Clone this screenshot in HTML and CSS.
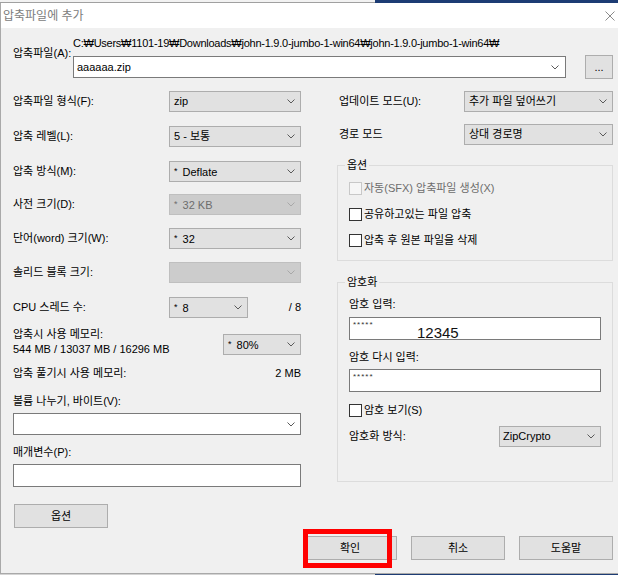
FILE: index.html
```html
<!DOCTYPE html>
<html lang="ko">
<head>
<meta charset="utf-8">
<title>압축파일에 추가</title>
<link rel="stylesheet" href="styles.css">
</head>
<body>
<svg class="defs" width="0" height="0" aria-hidden="true">
  <symbol id="chev" viewBox="0 0 8 5"><path d="M0.5 0.5 L4 4 L7.5 0.5" fill="none" stroke="currentColor" stroke-width="1"/></symbol>
</svg>
<div class="strip strip-top"><div class="strip-light"></div><div class="strip-dark"></div></div>
<div class="window">
  <div class="titlebar">
    <span class="title">압축파일에 추가</span>
    <svg class="close" width="10" height="10" viewBox="0 0 10 10"><path d="M0.5 0.5 L9.5 9.5 M9.5 0.5 L0.5 9.5" stroke="#8a8a8a" stroke-width="1" fill="none"/></svg>
  </div>
  <div class="body">
    <div class="file-row">
      <div class="file-label">압축파일(A):</div>
      <div class="file-main">
        <div class="path">C:₩Users₩1101-19₩Downloads₩john-1.9.0-jumbo-1-win64₩john-1.9.0-jumbo-1-win64₩</div>
        <div class="file-inputs">
          <div class="combo file-combo"><span>aaaaaa.zip</span><svg class="chev"><use href="#chev"/></svg></div>
          <div class="btn browse">...</div>
        </div>
      </div>
    </div>

    <div class="columns">
      <div class="col-left">
        <div class="srow"><span>압축파일 형식(F):</span><div class="select w132"><span>zip</span><svg class="chev"><use href="#chev"/></svg></div></div>
        <div class="srow"><span>압축 레벨(L):</span><div class="select w132"><span>5 - 보통</span><svg class="chev"><use href="#chev"/></svg></div></div>
        <div class="srow"><span>압축 방식(M):</span><div class="select w132"><span><span class="ast">*</span>Deflate</span><svg class="chev"><use href="#chev"/></svg></div></div>
        <div class="srow"><span>사전 크기(D):</span><div class="select w132 disabled"><span><span class="ast">*</span>32 KB</span><svg class="chev"><use href="#chev"/></svg></div></div>
        <div class="srow"><span>단어(word) 크기(W):</span><div class="select w132"><span><span class="ast">*</span>32</span><svg class="chev"><use href="#chev"/></svg></div></div>
        <div class="srow"><span>솔리드 블록 크기:</span><div class="select w132 disabled"><span></span><svg class="chev"><use href="#chev"/></svg></div></div>
        <div class="cpu"><span>CPU 스레드 수:</span><div class="select"><span><span class="ast">*</span>8</span><svg class="chev"><use href="#chev"/></svg></div><span class="right">/ 8</span></div>
        <div class="mem">
          <div class="mem-text">압축시 사용 메모리:<br>544 MB / 13037 MB / 16296 MB</div>
          <div class="select"><span><span class="ast">*</span>80%</span><svg class="chev"><use href="#chev"/></svg></div>
        </div>
        <div class="decomp"><span>압축 풀기시 사용 메모리:</span><span>2 MB</span></div>
        <div class="lbl">볼륨 나누기, 바이트(V):</div>
        <div><div class="combo vol-combo"><span></span><svg class="chev"><use href="#chev"/></svg></div></div>
        <div class="lbl">매개변수(P):</div>
        <div><div class="input"></div></div>
        <div><div class="btn opt-btn">옵션</div></div>
      </div>

      <div class="col-right">
        <div class="rrow"><span>업데이트 모드(U):</span><div class="select w149"><span>추가 파일 덮어쓰기</span><svg class="chev"><use href="#chev"/></svg></div></div>
        <div class="rrow"><span>경로 모드</span><div class="select w149"><span>상대 경로명</span><svg class="chev"><use href="#chev"/></svg></div></div>

        <fieldset class="group opts">
          <legend>옵션</legend>
          <div class="check off"><span class="cb"></span><span>자동(SFX) 압축파일 생성(X)</span></div>
          <div class="check"><span class="cb"></span><span>공유하고있는 파일 압축</span></div>
          <div class="check"><span class="cb"></span><span>압축 후 원본 파일을 삭제</span></div>
        </fieldset>

        <fieldset class="group enc">
          <legend>암호화</legend>
          <div class="enc-label">암호 입력:</div>
          <div class="pw">*****<span class="pw-note">12345</span></div>
          <div class="enc-label second">암호 다시 입력:</div>
          <div class="pw second">*****</div>
          <div class="check show"><span class="cb"></span><span>암호 보기(S)</span></div>
          <div class="method"><span>암호화 방식:</span><div class="select w102"><span>ZipCrypto</span><svg class="chev"><use href="#chev"/></svg></div></div>
        </fieldset>
      </div>
    </div>

    <div class="actions">
      <div class="btn act">확인</div>
      <div class="btn act">취소</div>
      <div class="btn act">도움말</div>
    </div>
  </div>
</div>
<div class="strip strip-bottom"><div class="strip-light"></div><div class="strip-dark"></div></div>
<div class="highlight"></div>
</body>
</html>
```

FILE: styles.css
```css
* { box-sizing: border-box; }
html, body { margin: 0; padding: 0; }
body {
  width: 618px;
  height: 575px;
  overflow: hidden;
  position: relative;
  font-family: "Liberation Sans", "Noto Sans CJK KR", sans-serif;
  font-size: 11px;
  line-height: 13px;
  color: #000;
  background: #f0f0f0;
}
.defs { position: absolute; width: 0; height: 0; }

.strip { display: flex; }
.strip-top { height: 3px; }
.strip-top .strip-light { width: 375px; background: #f2f2f2; border-bottom: 1px solid #a0a0a0; }
.strip-dark { flex: 1; background: #1d3c74; }
.strip-bottom { height: 1px; }
.strip-bottom .strip-light { width: 375px; background: #d4d4d4; }

.window {
  height: 571px;
  display: flex;
  flex-direction: column;
  border-left: 1px solid #a9a9a9;
  border-bottom: 1px solid #a9a9a9;
}
.titlebar {
  height: 25px;
  flex: none;
  background: #fff;
  display: flex;
  align-items: center;
  justify-content: space-between;
  padding: 0 3px 0 2px;
}
.title { font-size: 12px; line-height: 14px; color: #7c7c7c; }

.body {
  flex: 1;
  background: #f0f0f0;
  padding: 9px 5px 0 12px;
  display: flex;
  flex-direction: column;
}

.file-row { display: grid; grid-template-columns: 60px 1fr; }
.file-label { padding-top: 10px; white-space: nowrap; }
.path { line-height: 13px; white-space: nowrap; letter-spacing: -0.25px; }
.file-inputs { display: flex; align-items: center; gap: 19px; margin-top: 5px; height: 24px; }

.chev { width: 8px; height: 5px; flex: none; color: #5a5a5a; }

.combo {
  display: flex;
  align-items: center;
  justify-content: space-between;
  height: 22px;
  background: #fff;
  border: 1px solid #7a7a7a;
  padding: 0 6px 0 3px;
  white-space: nowrap;
}
.file-combo { flex: 1; }
.vol-combo { width: 288px; padding-right: 5px; }

.btn {
  display: flex;
  align-items: center;
  justify-content: center;
  background: #e1e1e1;
  border: 1px solid #adadad;
  white-space: nowrap;
}
.browse { width: 28px; height: 24px; flex: none; }

.select {
  height: 21px;
  display: flex;
  align-items: center;
  justify-content: space-between;
  padding: 0 5px 0 4px;
  background: #e1e1e1;
  border: 1px solid #adadad;
  line-height: 19px;
  white-space: nowrap;
}
.select.disabled { background: #cccccc; border-color: #bfbfbf; color: #6d6d6d; }
.select.disabled .chev { color: #a8a8a8; }
.w132 { width: 132px; }
.w149 { width: 149px; }
.w102 { width: 102px; padding-left: 3px; }
.ast { font-size: 9px; vertical-align: 2px; margin-right: 5px; }

.columns { display: flex; gap: 36px; margin-top: 12px; }
.col-left {
  width: 288px;
  display: grid;
  grid-template-rows: 35px 35px 33px 34px 34px 35px 30px 39px 28px 19px 32px 19px 40px 24px;
}
.col-right { width: 276px; display: flex; flex-direction: column; }

.srow { display: flex; justify-content: space-between; align-items: flex-start; line-height: 21px; white-space: nowrap; }
.cpu { display: grid; grid-template-columns: 156px 79px 1fr; align-items: start; line-height: 21px; }
.right { text-align: right; }
.mem { display: grid; grid-template-columns: 1fr 78px; align-items: start; }
.mem-text { line-height: 15px; white-space: nowrap; }
.mem .select { margin-top: 7px; }
.decomp { display: flex; justify-content: space-between; line-height: 14px; }
.lbl { line-height: 14px; }
.input { height: 23px; width: 288px; background: #fff; border: 1px solid #7a7a7a; }
.opt-btn { width: 94px; height: 24px; margin-left: 1px; }

.rrow { display: flex; justify-content: space-between; align-items: flex-start; line-height: 21px; padding-left: 2px; }
.rrow + .rrow { margin-top: 12px; }

.group {
  margin: 13px 0 0;
  padding: 10px 11px 13px;
  border: 1px solid #dcdcdc;
  min-width: 0;
}
.group legend { padding: 0 2px; margin-left: -4px; line-height: 14px; }
.group.enc { margin-top: 14px; padding-top: 8px; padding-bottom: 34px; }

.check { display: flex; align-items: center; gap: 2px; line-height: 13px; }
.check + .check { margin-top: 13px; }
.cb { width: 13px; height: 13px; flex: none; border: 1px solid #333; background: #fff; }
.check.off { color: #6d6d6d; }
.check.off .cb { border-color: #c8c8c8; background: #f6f6f6; }

.enc-label { line-height: 14px; }
.enc-label.second { margin-top: 10px; }
.pw {
  position: relative;
  height: 23px;
  margin-top: 6px;
  background: #fff;
  border: 1px solid #7a7a7a;
  padding: 2px 0 0 3px;
  font-size: 8px;
  line-height: 10px;
  letter-spacing: 1px;
  color: #333;
}
.pw.second { margin-top: 5px; }
.pw-note {
  position: absolute;
  left: 67px;
  top: 7px;
  font-size: 15px;
  line-height: 15px;
  letter-spacing: 0;
  color: #111;
}
.check.show { margin-top: 12px; }
.method { margin-top: 9px; display: flex; justify-content: space-between; align-items: flex-start; line-height: 21px; }

.actions { display: flex; justify-content: flex-end; gap: 14px; margin-top: 8px; }
.act { width: 94px; height: 24px; }

.highlight {
  position: absolute;
  left: 303px;
  top: 529px;
  width: 89px;
  height: 39px;
  border: 5px solid #ff0000;
}
```
